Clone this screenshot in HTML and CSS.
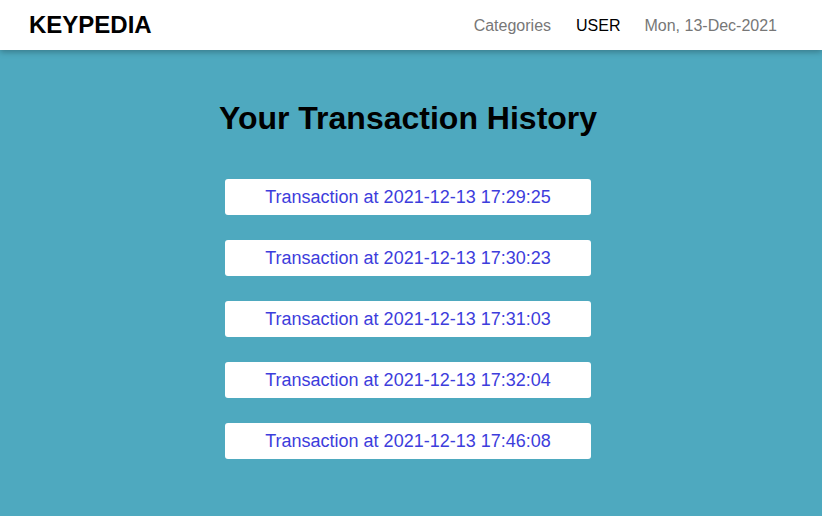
FILE: index.html
```html
<!DOCTYPE html>
<html lang="en">
<head>
<meta charset="utf-8">
<title>Keypedia - Transaction History</title>
<link rel="stylesheet" href="styles.css">
</head>
<body>
<header class="topbar">
  <div class="brand">KEYPEDIA</div>
  <nav class="nav">
    <a class="nav-link" href="#">Categories</a>
    <a class="nav-link nav-user" href="#">USER</a>
    <span class="nav-date">Mon, 13-Dec-2021</span>
  </nav>
</header>
<main class="content">
  <h1 class="title">Your Transaction History</h1>
  <ul class="tx-list">
    <li><a class="tx-card" href="#">Transaction at 2021-12-13 17:29:25</a></li>
    <li><a class="tx-card" href="#">Transaction at 2021-12-13 17:30:23</a></li>
    <li><a class="tx-card" href="#">Transaction at 2021-12-13 17:31:03</a></li>
    <li><a class="tx-card" href="#">Transaction at 2021-12-13 17:32:04</a></li>
    <li><a class="tx-card" href="#">Transaction at 2021-12-13 17:46:08</a></li>
  </ul>
</main>
</body>
</html>
```
FILE: styles.css
```css
html, body {
  margin: 0;
  padding: 0;
}
body {
  background: #4ea9bf;
  font-family: "Liberation Sans", Arial, sans-serif;
  min-height: 516px;
}
.topbar {
  position: relative;
  z-index: 1;
  height: 50px;
  background: #fff;
  display: flex;
  align-items: center;
  justify-content: space-between;
  padding: 0 45px 0 29px;
  box-shadow: 0 2px 6px rgba(0, 0, 0, 0.28);
}
.brand {
  font-size: 24px;
  font-weight: bold;
  color: #000;
}
.nav {
  display: flex;
  align-items: center;
  gap: 25px;
  font-size: 16px;
  padding-top: 1px;
}
.nav-link {
  text-decoration: none;
  color: #777;
}
.nav-user {
  color: #000;
}
.nav-date {
  color: #777;
  margin-left: -1px;
}
.content {
  padding: 50px 6px 0 0;
  display: flex;
  flex-direction: column;
  align-items: center;
}
.title {
  margin: 0;
  font-size: 32px;
  line-height: 37px;
  font-weight: bold;
  color: #000;
}
.tx-list {
  list-style: none;
  margin: 42px 0 0;
  padding: 0;
  display: flex;
  flex-direction: column;
  gap: 25px;
}
.tx-card {
  display: flex;
  align-items: center;
  justify-content: center;
  width: 366px;
  height: 36px;
  background: #fff;
  border-radius: 3px;
  color: #3d3ddc;
  font-size: 18px;
  text-decoration: none;
}
```
